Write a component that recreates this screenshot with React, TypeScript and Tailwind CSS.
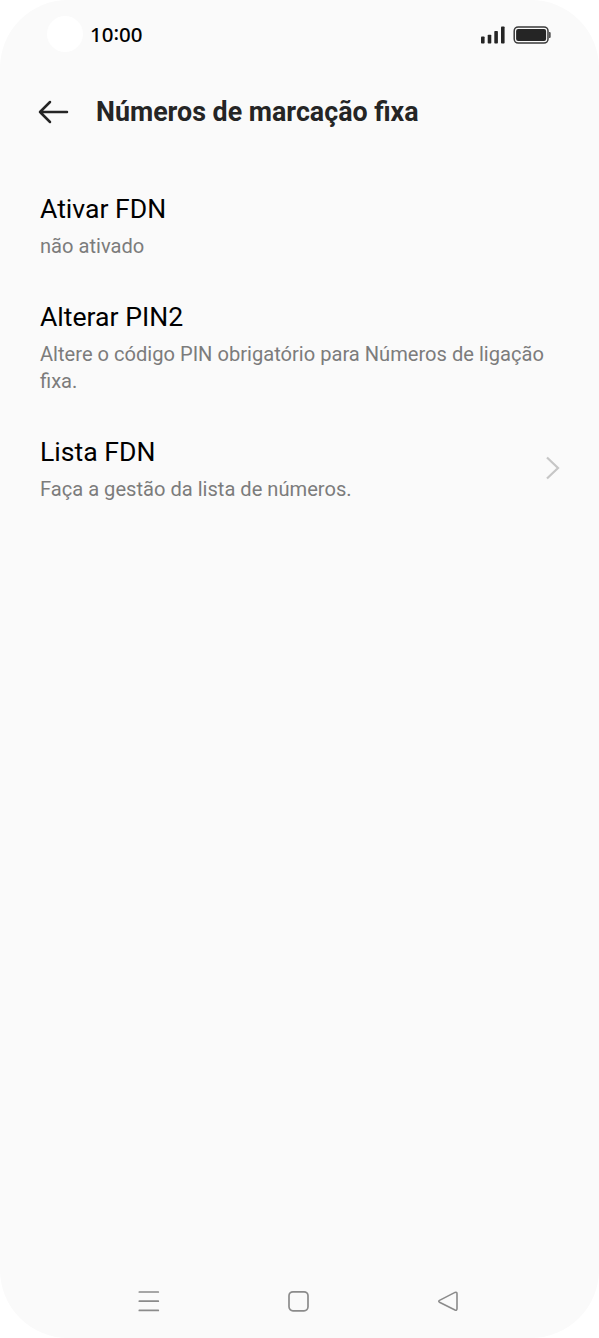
import React from "react";

interface SettingProps {
  title: string;
  description: string;
  hasArrow?: boolean;
}

const settings: SettingProps[] = [
  { title: "Ativar FDN", description: "não ativado" },
  {
    title: "Alterar PIN2",
    description: "Altere o código PIN obrigatório para Números de ligação fixa.",
  },
  {
    title: "Lista FDN",
    description: "Faça a gestão da lista de números.",
    hasArrow: true,
  },
];

const StatusBar: React.FC = () => (
  <div className="flex h-[70px] items-center pl-[47px] pr-[48px]">
    <div className="-mt-[2px] size-9 rounded-full bg-white" />
    <p className="-mt-px ml-[7px] font-['Noto_Sans',sans-serif] text-[20.5px] font-medium leading-none text-black">
      10<span className="relative -top-[2px]">:</span>00
    </p>
    <div className="ml-auto flex items-center gap-2">
      <svg width="25" height="18" viewBox="0 0 25 18" fill="#252525">
        <rect x="1" y="10.5" width="3.6" height="7" rx="0.8" />
        <rect x="7.7" y="8.8" width="3.6" height="8.7" rx="0.8" />
        <rect x="14.3" y="5" width="3.6" height="12.5" rx="0.8" />
        <rect x="21" y="0.5" width="3.6" height="17" rx="0.8" />
      </svg>
      <svg width="38" height="18" viewBox="0 0 38 18">
        <rect x="1.2" y="0.9" width="33.8" height="16.2" rx="4" fill="none" stroke="#3a3a3a" strokeWidth="1.5" />
        <rect x="3.1" y="3" width="30" height="12" rx="2" fill="#252525" />
        <path d="M36 6h.6a1.1 1.1 0 0 1 1.1 1.1v3.8a1.1 1.1 0 0 1-1.1 1.1H36z" fill="#555" />
      </svg>
    </div>
  </div>
);

const Setting: React.FC<SettingProps> = ({ title, description, hasArrow }) => (
  <div className="flex items-center justify-between pb-[41px]">
    <div>
      <h2 className="text-[26.6px] leading-8 text-black">{title}</h2>
      <p className="mt-2 text-[20.12px] leading-[27px] text-[#7c7c7c]">
        {description}
      </p>
    </div>
    {hasArrow && (
      <svg className="-mt-1 shrink-0" width="14" height="24" viewBox="0 0 14 24" fill="none" stroke="#c6c6c6" strokeWidth="2.2">
        <path d="M1 1.5 12 12 1 22.5" />
      </svg>
    )}
  </div>
);

const NavigationBar: React.FC = () => (
  <nav className="mt-auto flex h-[74px] items-center justify-between pl-[138px] pr-[140px]">
    <svg width="22" height="22" viewBox="0 0 22 22" fill="none" stroke="#8b8b8b" strokeWidth="1.7" strokeLinecap="round">
      <path d="M1.3 2h19M1.3 11.2h19M1.3 20.4h19" />
    </svg>
    <svg width="22" height="22" viewBox="0 0 22 22" fill="none" stroke="#8b8b8b" strokeWidth="1.7">
      <rect x="1" y="1.8" width="19" height="19" rx="4" />
    </svg>
    <svg width="22" height="22" viewBox="0 0 22 22" fill="none" stroke="#8b8b8b" strokeWidth="1.6">
      <path d="M2.5 10.4 18 2.4Q20 1.6 20 3.8v14.8Q20 20.8 18 20L2.5 12.2Q1 11.3 2.5 10.4Z" />
    </svg>
  </nav>
);

const App: React.FC = () => {
  return (
    <div className="h-[1338px] w-[599px] bg-white">
      <div className="flex h-full flex-col rounded-[68px] bg-[#fafafa] font-[Roboto,sans-serif]">
        <StatusBar />
        <header className="flex h-[83px] items-center pl-[38px]">
          <svg width="31" height="24" viewBox="0 0 31 24" fill="none" stroke="#252525" strokeWidth="2.5" strokeLinecap="round" strokeLinejoin="round">
            <path d="M29 12H2M12 2 2 12l10 10" />
          </svg>
          <h1 className="ml-[27px] text-[26.8px] font-bold leading-8 text-[#252525]">
            Números de marcação fixa
          </h1>
        </header>
        <main className="pl-10 pr-[39px] pt-10">
          {settings.map((item) => (
            <Setting key={item.title} {...item} />
          ))}
        </main>
        <NavigationBar />
      </div>
    </div>
  );
};

export default App;
